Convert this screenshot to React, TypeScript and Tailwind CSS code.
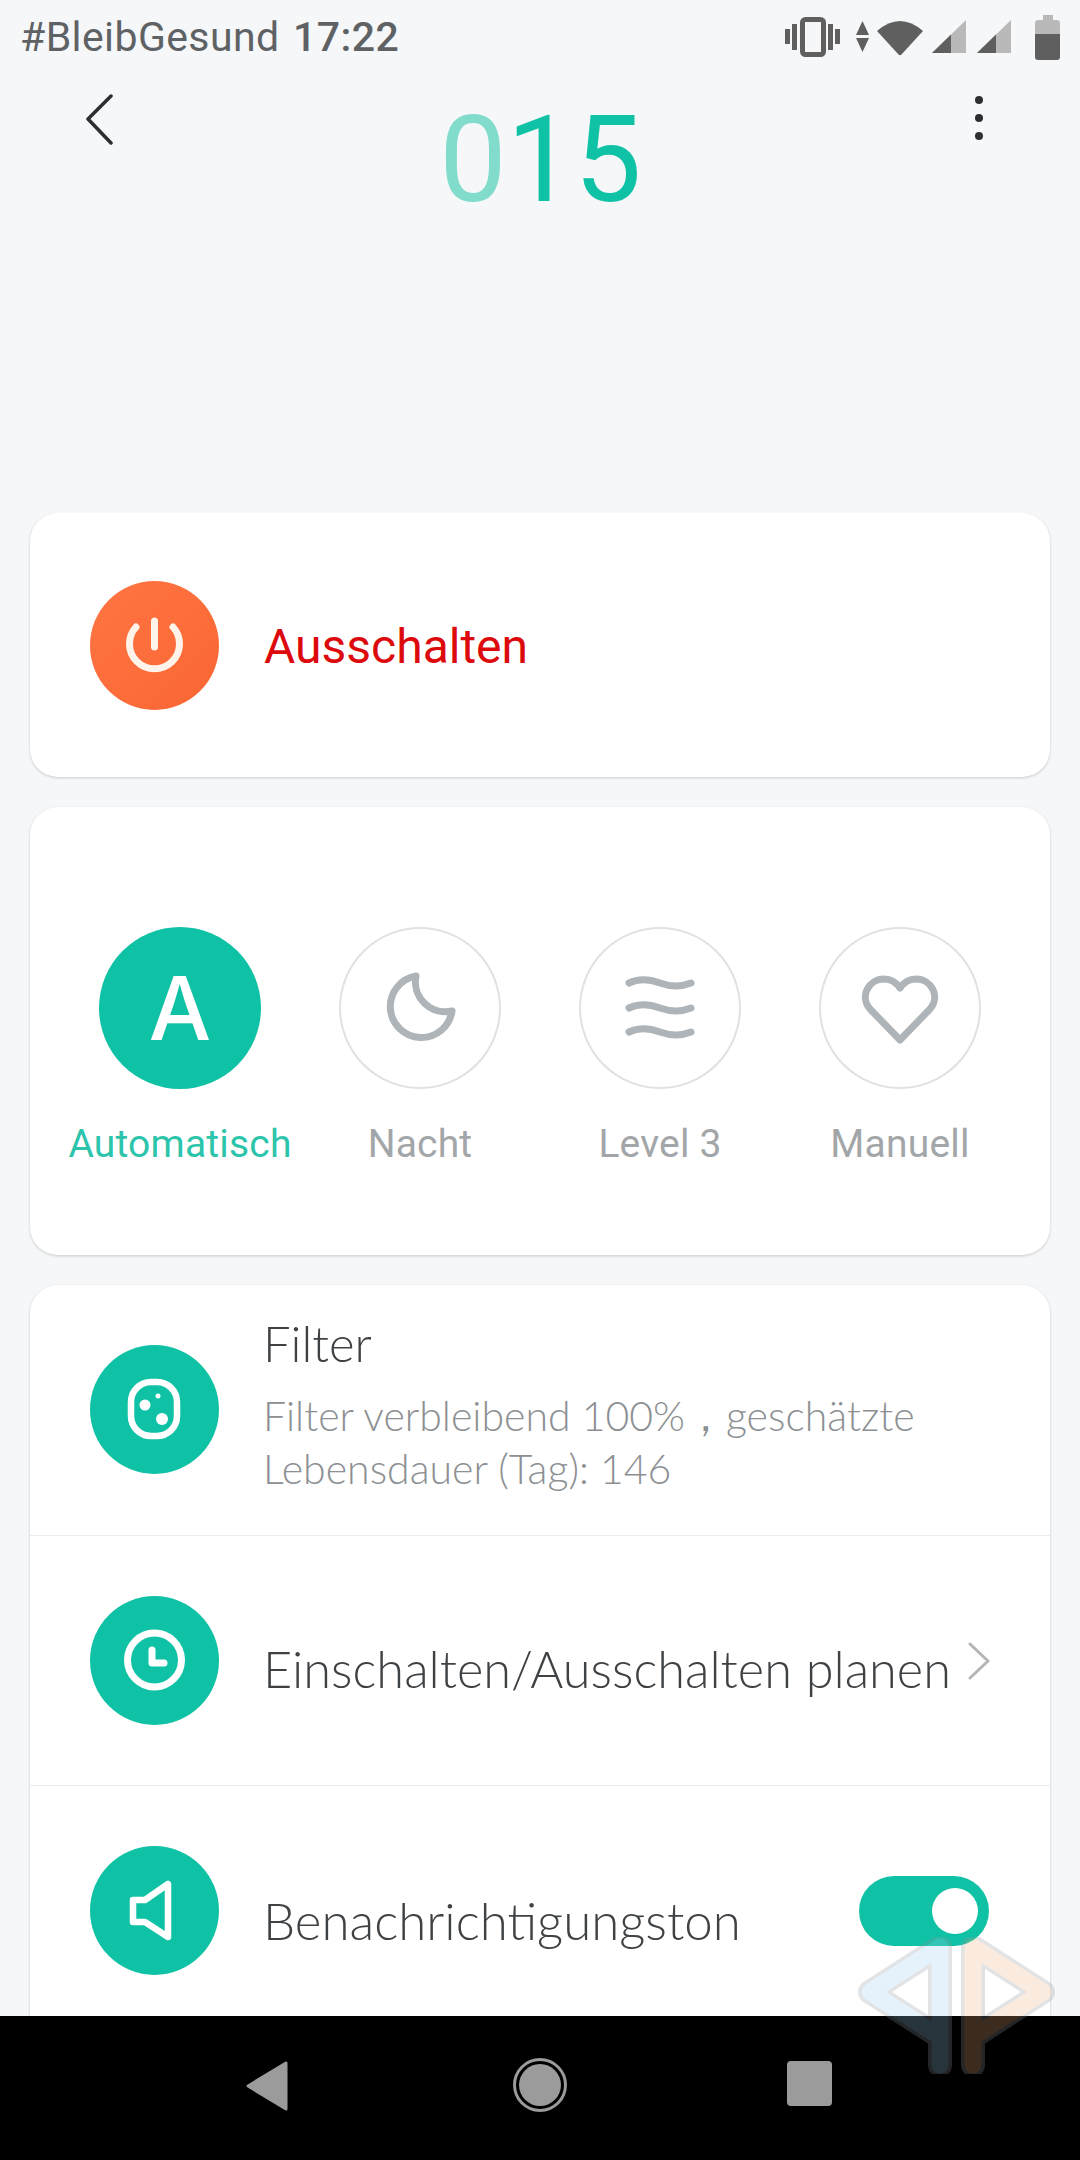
const Teal = "bg-[#10c2a5]";

function IconCircle({ children, className = Teal }: { children: React.ReactNode; className?: string }) {
  return (
    <div className={`w-[129px] h-[129px] rounded-full shrink-0 ${className}`}>
      <svg width="129" height="129" viewBox="0 0 129 129" fill="none" stroke="#fff" strokeLinecap="round" strokeLinejoin="round">
        {children}
      </svg>
    </div>
  );
}

function Mode({ label, active, children }: { label: string; active?: boolean; children: React.ReactNode }) {
  return (
    <div className="w-[240px] flex flex-col items-center">
      <div
        className={`w-[162px] h-[162px] rounded-full flex items-center justify-center ${
          active ? "bg-[#10c2a5]" : "border-[2.5px] border-[#e0e2e2] bg-white"
        }`}
      >
        {children}
      </div>
      <div
        className={`mt-[32px] text-[39px] leading-[46px] tracking-[0.2px] font-['Roboto',sans-serif] font-normal ${
          active ? "text-[#2cc4ab]" : "text-[#a3a6a8]"
        }`}
      >
        {label}
      </div>
    </div>
  );
}

function ModeSvg({ children }: { children: React.ReactNode }) {
  return (
    <svg width="90" height="90" viewBox="0 0 90 90" fill="none" stroke="#aeb4b8" strokeWidth="7" strokeLinecap="round" strokeLinejoin="round">
      {children}
    </svg>
  );
}

function Signal() {
  return (
    <svg width="34" height="34" viewBox="0 0 34 34">
      <polygon points="0,33 34,0 34,33" fill="#b9b9b9" />
      <polygon points="0,33 19,14.5 19,33" fill="#5f5f5f" />
    </svg>
  );
}

export default function App() {
  return (
    <div className="relative w-[1080px] h-[2160px] overflow-hidden bg-[#f5f7f9] flex flex-col font-['Roboto',sans-serif]">
      {/* Status bar */}
      <div className="h-[74px] shrink-0 flex items-center justify-between pl-[20px] pr-[20px]">
        <div className="text-[41px] leading-[74px] text-[#5f6265] whitespace-nowrap tracking-[0.4px]">
          #BleibGesund <span className="ml-[3px] font-medium">17:22</span>
        </div>
        <div className="flex items-center">
          <svg width="55" height="42" viewBox="0 0 55 42" fill="#5f5f5f">
            <rect x="17.5" y="3.5" width="21" height="35" rx="3" fill="none" stroke="#5f5f5f" strokeWidth="5" />
            <rect x="0" y="13" width="5" height="15" />
            <rect x="7" y="8" width="5" height="26" />
            <rect x="43" y="8" width="5" height="26" />
            <rect x="50" y="13" width="5" height="15" />
          </svg>
          <svg className="ml-[16px]" width="13" height="32" viewBox="0 0 13 32" fill="#5f5f5f">
            <polygon points="6.5,0 13,14 0,14" />
            <polygon points="0,17 13,17 6.5,31" />
          </svg>
          <svg className="ml-[8px]" width="46" height="38" viewBox="0 0 46 38" fill="#5f5f5f">
            <path d="M0 13 Q23 -7 46 13 L24.5 36.5 Q23 38 21.5 36.5 Z" />
          </svg>
          <div className="ml-[9px]"><Signal /></div>
          <div className="ml-[11px]"><Signal /></div>
          <svg className="ml-[24px]" width="25" height="45" viewBox="0 0 25 45">
            <path d="M8 0 H18 V5 H22 Q25 5 25 8 V19 H0 V8 Q0 5 3 5 H8 Z" fill="#b9b9b9" />
            <path d="M0 19 H25 V42 Q25 45 22 45 H3 Q0 45 0 42 Z" fill="#5f5f5f" />
          </svg>
        </div>
      </div>

      {/* Header */}
      <div className="h-[439px] shrink-0 flex items-start justify-between pl-[84px] pr-[96px]">
        <svg className="mt-[19px]" width="30" height="52" viewBox="0 0 30 52" fill="none" stroke="#2c2e30" strokeWidth="3.5" strokeLinecap="round" strokeLinejoin="round">
          <path d="M27 3 L4 26 L27 50" />
        </svg>
        <div className="mt-[16px] -ml-[7px] text-[120px] leading-[140px] text-[#10c2a5] tracking-normal">
          <span className="text-[#82dccb]">0</span>15
        </div>
        <div className="mt-[22px] w-[10px] flex flex-col items-center gap-[10px]">
          <div className="w-[8px] h-[8px] rounded-full bg-[#2c2e30]" />
          <div className="w-[8px] h-[8px] rounded-full bg-[#2c2e30]" />
          <div className="w-[8px] h-[8px] rounded-full bg-[#2c2e30]" />
        </div>
      </div>

      {/* Cards */}
      <div className="flex-1 min-h-0 overflow-hidden px-[30px] flex flex-col gap-[30px]">
        <div className="h-[264px] shrink-0 rounded-[28px] bg-white shadow-[0_1px_3px_rgba(0,0,0,0.18)] flex items-center pl-[60px]">
          <IconCircle className="bg-linear-to-br from-[#ff7543] to-[#f96632]">
            <g stroke="#fff3ea" strokeWidth="7">
              <path d="M46 46 A 25 25 0 1 0 83 46" />
              <path d="M64.5 40 V66" />
            </g>
          </IconCircle>
          <div className="ml-[45px] mt-[4px] text-[48px] leading-[54px] text-[#dc0a0c] font-['Roboto',sans-serif]">Ausschalten</div>
        </div>

        <div className="h-[448px] shrink-0 rounded-[28px] bg-white shadow-[0_1px_3px_rgba(0,0,0,0.18)] pt-[120px] flex justify-center">
          <Mode label="Automatisch" active>
            <span className="text-white text-[88px] leading-none font-['Inter',sans-serif] font-medium">A</span>
          </Mode>
          <Mode label="Nacht">
            <ModeSvg>
              <path d="M41 13 A 31 31 0 1 0 77 48 A 30 30 0 0 1 41 13 Z" />
            </ModeSvg>
          </Mode>
          <Mode label="Level 3">
            <ModeSvg>
              <path d="M14 20 C24 15 34 16 45 20 S66 24 76 20" />
              <path d="M14 45 C24 40 34 41 45 45 S66 49 76 45" />
              <path d="M14 69 C24 64 34 65 45 69 S66 73 76 69" />
            </ModeSvg>
          </Mode>
          <Mode label="Manuell">
            <ModeSvg>
              <path d="M45 77 L15 46 C4 33 14 16 29 16 C36 16 41 19 45 25 C49 19 54 16 61 16 C76 16 86 33 75 46 Z" />
            </ModeSvg>
          </Mode>
        </div>

        <div className="shrink-0 rounded-[28px] bg-white shadow-[0_1px_3px_rgba(0,0,0,0.18)] font-['Lato',sans-serif] font-light">
          <div className="h-[251px] border-b-[1.5px] border-[#ececec] flex items-center pl-[60px]">
            <div className="mb-[2px]">
              <IconCircle>
                <rect x="41" y="37" width="46" height="54" rx="20" strokeWidth="6.5" />
                <circle cx="55" cy="60" r="5.5" fill="#fff" stroke="none" />
                <circle cx="72" cy="74" r="6" fill="#fff" stroke="none" />
                <circle cx="68" cy="51" r="2.5" fill="#fff" stroke="none" />
              </IconCircle>
            </div>
            <div className="ml-[44px] -mt-[11px]">
              <div className="text-[49px] leading-[58px] text-[#3f4245]">Filter</div>
              <div className="mt-[17px] text-[41px] leading-[53px] text-[#8d9093] w-[700px]">
                Filter verbleibend 100%，geschätzte
                <br />
                Lebensdauer (Tag): 146
              </div>
            </div>
          </div>
          <div className="h-[250px] border-b-[1.5px] border-[#ececec] flex items-center pl-[60px] relative">
            <IconCircle>
              <circle cx="64.5" cy="64" r="27" strokeWidth="7" />
              <path d="M62 54 V67 H74" strokeWidth="7" />
            </IconCircle>
            <div className="ml-[44px] mt-[16px] text-[50.5px] leading-[58px] text-[#3f4245] whitespace-nowrap">Einschalten/Ausschalten planen</div>
            <svg className="absolute left-[938px] top-[106px]" width="22" height="38" viewBox="0 0 22 38" fill="none" stroke="#b3b5b7" strokeWidth="3" strokeLinecap="round" strokeLinejoin="round">
              <path d="M2 2 L20 19 L2 36" />
            </svg>
          </div>
          <div className="h-[260px] flex items-start pt-[60px] pl-[60px]">
            <IconCircle>
              <path d="M43 54 H55 L78 38 V91 L55 76 H43 Z" strokeWidth="6.5" />
            </IconCircle>
            <div className="ml-[44px] mt-[46px] text-[51px] leading-[58px] text-[#3f4245] flex-1">Benachrichtigungston</div>
            <div className="mt-[30px] mr-[61px] w-[130px] h-[70px] rounded-full bg-[#10c2a5] flex items-center justify-end pr-[11px]">
              <div className="w-[46px] h-[46px] rounded-full bg-white" />
            </div>
          </div>
        </div>
      </div>

      {/* Navigation bar */}
      <div className="h-[144px] shrink-0 bg-black flex items-start pt-[45px] pl-[246px]">
        <svg width="42" height="50" viewBox="0 0 42 50" fill="#9b9b9b" stroke="#9b9b9b" strokeWidth="3" strokeLinejoin="round">
          <polygon points="2,25 40,2 40,48" />
        </svg>
        <svg className="ml-[225px] -mt-[3px]" width="54" height="54" viewBox="0 0 54 54">
          <circle cx="27" cy="27" r="25.5" fill="none" stroke="#9b9b9b" strokeWidth="3" />
          <circle cx="27" cy="27" r="21" fill="#9b9b9b" />
        </svg>
        <div className="ml-[220px] w-[45px] h-[45px] rounded-[4px] bg-[#9b9b9b]" />
      </div>

      {/* Watermark overlay */}
      <svg className="absolute left-[858px] top-[1937px] pointer-events-none opacity-25" width="197" height="137" viewBox="0 0 197 137" fill="none" strokeLinejoin="round" strokeLinecap="round">
        <path d="M82 128 V10 L12 55 L82 100" stroke="#8f949c" strokeWidth="24" />
        <path d="M82 128 V10 L12 55 L82 100" stroke="#a0cdf0" strokeWidth="17" />
        <path d="M115 128 V10 L185 55 L115 100" stroke="#8f949c" strokeWidth="24" />
        <path d="M115 128 V10 L185 55 L115 100" stroke="#f0b080" strokeWidth="17" />
      </svg>
    </div>
  );
}
